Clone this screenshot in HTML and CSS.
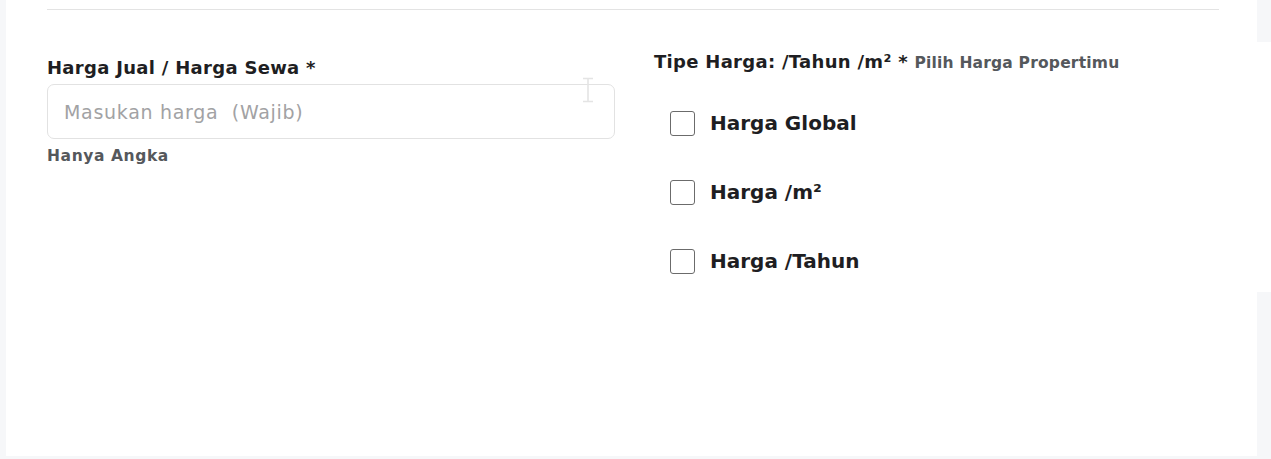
FILE: index.html
```html
<!DOCTYPE html>
<html lang="id">
<head>
<meta charset="utf-8">
<link rel="stylesheet" href="styles.css">
</head>
<body>
<div class="page">
  <div class="card">
    <div class="inner">
      <div class="rule"></div>
      <div class="grid">
        <div class="col-left">
          <label class="label">Harga Jual / Harga Sewa *</label>
          <div class="input-wrap">
            <input class="input" type="text" placeholder="Masukan harga  (Wajib)">
            <svg class="ibeam" width="12" height="26" viewBox="0 0 12 26"><path d="M1 1.5h10M1 24.5h10M6 1.5v23" stroke="#e4e4e4" stroke-width="1.6" fill="none"/></svg>
          </div>
          <div class="hint">Hanya Angka</div>
        </div>
        <div class="col-right">
          <div class="label">Tipe Harga: /Tahun /m² * <span class="sub">Pilih Harga Propertimu</span></div>
          <div class="options">
            <label class="opt"><span class="box"></span><span class="opt-text">Harga Global</span></label>
            <label class="opt"><span class="box"></span><span class="opt-text">Harga /m²</span></label>
            <label class="opt"><span class="box"></span><span class="opt-text">Harga /Tahun</span></label>
          </div>
        </div>
      </div>
    </div>
  </div>
  <div class="side">
    <div class="side-white"></div>
  </div>
</div>
</body>
</html>
```

FILE: styles.css
```css
html, body {
  margin: 0;
  padding: 0;
  background: #f6f7f9;
  font-family: "DejaVu Sans", sans-serif;
  color: #1e1e22;
}
.page {
  display: flex;
  height: 459px;
  padding-left: 6px;
}
.card {
  width: 1251px;
  height: 456px;
  background: #ffffff;
}
.inner {
  padding: 0 38px 0 41px;
}
.rule {
  margin-top: 9px;
  height: 1px;
  background: #e3e3e3;
}
.grid {
  display: grid;
  grid-template-columns: 568px 1fr;
  column-gap: 39px;
}
.col-left {
  padding-top: 46px;
  display: flex;
  flex-direction: column;
}
.label {
  font-weight: 700;
  font-size: 18px;
  letter-spacing: 0.3px;
  line-height: 24px;
  color: #1e1e22;
}
.input-wrap {
  position: relative;
  margin-top: 4px;
}
.input {
  box-sizing: border-box;
  width: 568px;
  height: 55px;
  border: 1px solid #e2e2e2;
  border-radius: 7px;
  padding: 0 16px;
  font-family: inherit;
  font-size: 19px;
  letter-spacing: 0.7px;
  color: #333;
  outline: none;
}
.input::placeholder {
  color: #a2a2a4;
}
.ibeam {
  position: absolute;
  left: 535px;
  top: -7px;
}
.hint {
  margin-top: 7px;
  font-weight: 700;
  font-size: 15.5px;
  letter-spacing: 0.6px;
  line-height: 20px;
  color: #55585c;
}
.col-right {
  padding-top: 40px;
}
.sub {
  font-size: 15.5px;
  letter-spacing: 0.2px;
  color: #55585c;
}
.options {
  display: flex;
  flex-direction: column;
  gap: 41px;
  padding-left: 16px;
  margin-top: 34px;
}
.opt {
  display: flex;
  align-items: center;
  gap: 15px;
  height: 28px;
}
.box {
  box-sizing: border-box;
  width: 25px;
  height: 25px;
  border: 1.5px solid #6b6b6b;
  border-radius: 3px;
  background: #fff;
}
.opt-text {
  font-weight: 700;
  font-size: 20px;
  color: #1e1e22;
}
.side {
  width: 14px;
  display: flex;
  flex-direction: column;
}
.side-white {
  margin-top: 42px;
  height: 250px;
  background: #ffffff;
}
```
